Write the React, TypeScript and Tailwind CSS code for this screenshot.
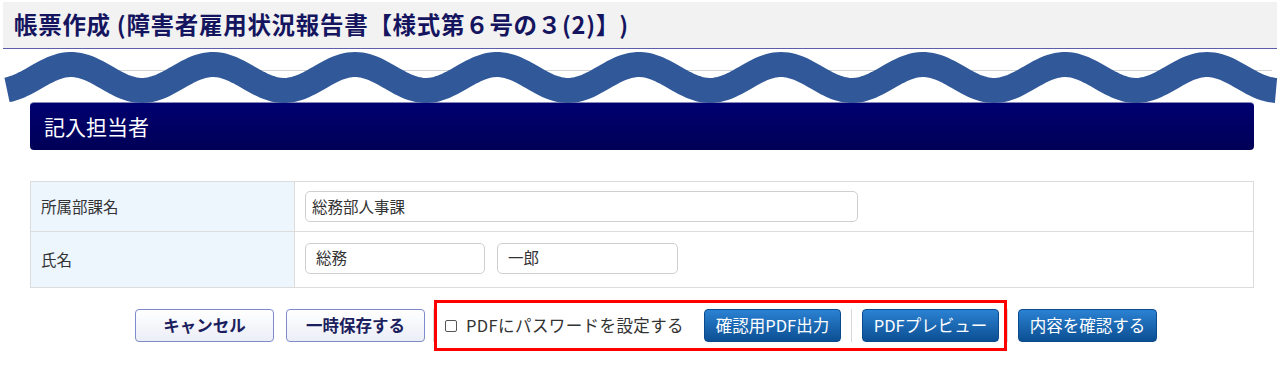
import React from "react";

const jp = { fontFamily: '"Noto Sans CJK JP", "Noto Sans", sans-serif' };

// centre line of the torn-page wave, sampled as a sine
function wavePath() {
  const pts: string[] = [];
  for (let x = 7; x <= 1277; x += 3) {
    const y = 77.5 - 13 * Math.cos((2 * Math.PI * (x - 71)) / 142);
    pts.push(`${pts.length ? "L" : "M"}${x},${y.toFixed(2)}`);
  }
  return pts.join(" ");
}

function Wave() {
  return (
    <svg
      className="absolute left-0 top-0 pointer-events-none"
      width={1283}
      height={120}
      viewBox="0 0 1283 120"
    >
      <path d={wavePath()} fill="none" stroke="#31599a" strokeWidth={25} strokeLinecap="butt" />
    </svg>
  );
}

function GrayButton({ children }: { children: React.ReactNode }) {
  return (
    <button className="h-[33px] w-[139px] rounded-[4px] border border-[#7f8acb] bg-linear-to-b from-white to-[#eceef7] text-[16.5px] font-bold text-[#1c1f5e]">
      {children}
    </button>
  );
}

function BlueButton({ children, w }: { children: React.ReactNode; w: string }) {
  return (
    <button
      className={`h-[33px] ${w} rounded-[4px] border border-[#0b4a8c] bg-linear-to-b from-[#2b82d3] to-[#0b4f93] text-[16.5px] text-white`}
    >
      {children}
    </button>
  );
}

function Separator() {
  return <div className="h-[33px] w-px bg-[#d8d8d8]" />;
}

export default function App() {
  return (
    <div className="relative w-[1283px] h-[368px] bg-white overflow-hidden" style={jp}>
      <div className="ml-[3px] mr-[6px] mt-[2px] h-[47px] bg-[#f2f2f2] border-b border-[#5d5daa] flex items-center pl-[11px]">
        <h1 className="text-[23.5px] font-bold text-[#15155f] tracking-[0.7px]">
          帳票作成 (障害者雇用状況報告書【様式第６号の３(2)】<span className="ml-[11px]">)</span>
        </h1>
      </div>

      <div className="ml-[30px] mr-[11px] mt-[21px] border-t border-[#d2d2d2]" />

      <div className="ml-[30px] mr-[29px] mt-[31px] h-[48px] rounded-[4px] border-t border-[#8a8ab8] bg-linear-to-b from-[#000070] to-[#000057] flex items-center pl-[14px]">
        <span className="text-[21px] text-white">記入担当者</span>
      </div>

      <div className="ml-[30px] mr-[29px] mt-[31px] border border-[#dcdcdc] text-[15.5px] text-[#333]">
        <div className="flex h-[50px] border-b border-[#dcdcdc]">
          <div className="w-[264px] bg-[#edf5fd] border-r border-[#dcdcdc] flex items-center pl-[10px]">
            所属部課名
          </div>
          <div className="flex items-center pl-[10px]">
            <div className="w-[553px] h-[31px] rounded-[5px] border border-[#cfcfcf] flex items-center pl-[6px]">
              総務部人事課
            </div>
          </div>
        </div>
        <div className="flex h-[55px]">
          <div className="w-[264px] bg-[#edf5fd] border-r border-[#dcdcdc] flex items-center pl-[10px]">
            氏名
          </div>
          <div className="flex items-center gap-[12px] pl-[10px] pb-[3px]">
            <div className="w-[180px] h-[31px] rounded-[5px] border border-[#cfcfcf] flex items-center pl-[10px]">
              総務
            </div>
            <div className="w-[181px] h-[31px] rounded-[5px] border border-[#cfcfcf] flex items-center pl-[10px]">
              一郎
            </div>
          </div>
        </div>
      </div>

      <div className="mt-[12px] flex items-center pl-[135px]">
        <GrayButton>キャンセル</GrayButton>
        <div className="w-[12px]" />
        <GrayButton>一時保存する</GrayButton>
        <div className="w-[9px] flex justify-end">
          <Separator />
        </div>
        <div className="h-[51px] w-[573px] border-[3px] border-[#ff0000] flex items-center pl-[8px]">
          <span className="w-[12px] h-[12px] border border-[#555] rounded-[2px] bg-white" />
          <span className="ml-[9px] text-[16.5px] tracking-[0.4px] text-[#333]">PDFにパスワードを設定する</span>
          <div className="ml-[20px]">
            <BlueButton w="w-[137px]">確認用PDF出力</BlueButton>
          </div>
          <div className="mx-[10px]">
            <Separator />
          </div>
          <BlueButton w="w-[137px]">PDFプレビュー</BlueButton>
        </div>
        <Separator />
        <div className="w-[10px]" />
        <BlueButton w="w-[139px]">内容を確認する</BlueButton>
      </div>

      <Wave />
    </div>
  );
}
